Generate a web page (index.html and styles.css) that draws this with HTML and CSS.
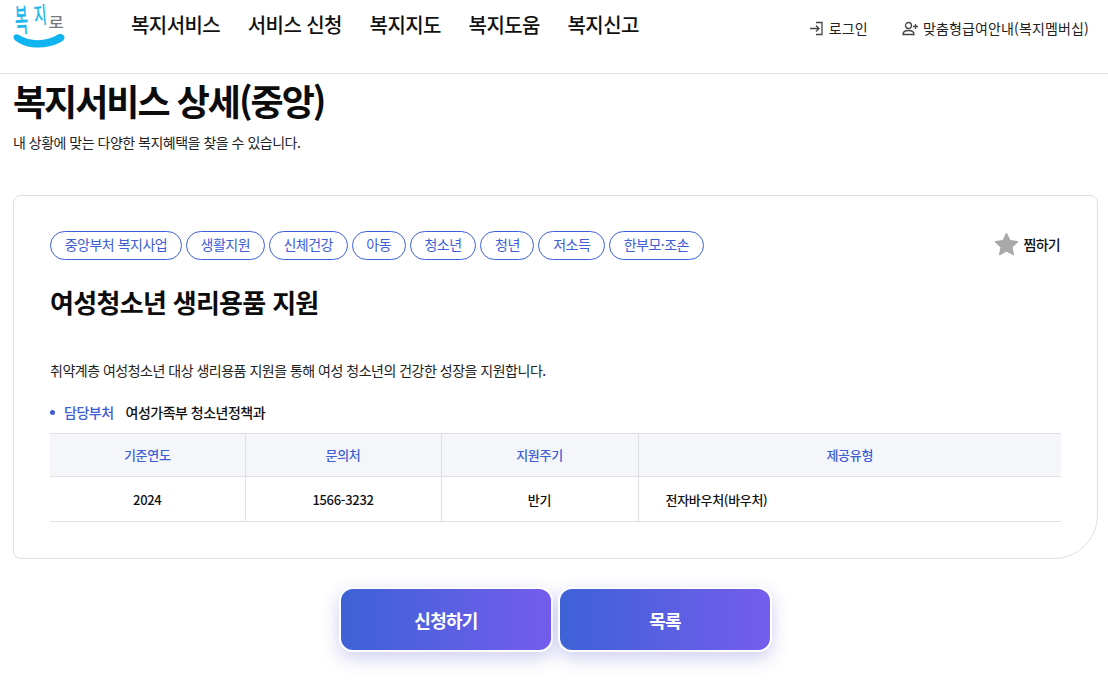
FILE: index.html
```html
<!DOCTYPE html>
<html lang="ko">
<head>
<meta charset="utf-8">
<title>복지서비스 상세(중앙)</title>
<link rel="stylesheet" href="styles.css">
</head>
<body>
<header class="header">
  <a class="logo" href="#" aria-label="복지로">
    <svg width="54" height="50" viewBox="0 0 54 50">
      <text class="logo-a" transform="translate(3.500 32) rotate(-3) scale(.8 1.78)">복</text>
      <text class="logo-b" transform="translate(22.500 24) rotate(-5) scale(.78 1.28)">지</text>
      <text class="logo-c" transform="translate(36.500 28) scale(.92 .8)">로</text>
      <path d="M1.500 37C1.500 34 5 33.500 7 35C18 42 34 42 46 34.500C49 33 53 35 52.500 38C52 40 50 41.500 48 42.500C34 50 14 49 4 41C2.500 40 1.500 38.500 1.500 37Z" class="logo-smile"/>
    </svg>
  </a>
  <nav class="gnb">
    <a href="#">복지서비스</a>
    <a href="#">서비스 신청</a>
    <a href="#">복지지도</a>
    <a href="#">복지도움</a>
    <a href="#">복지신고</a>
  </nav>
  <div class="util">
    <a href="#" class="util-login">
      <svg width="15" height="15" viewBox="0 0 15 15"><path d="M1 7.500H10M7 4.500L10 7.500L7 10.500M7 1.500H13V13.500H7" class="util-icon"/></svg>
      로그인
    </a>
    <a href="#" class="util-member">
      <svg width="17" height="15" viewBox="0 0 17 15"><circle cx="6.500" cy="4.500" r="3" class="util-icon"/><path d="M1 13.500C1 10.500 3 9.500 6.500 9.500S12 10.500 12 13.500ZM13.500 3V8M11 5.500H16" class="util-icon"/></svg>
      맞춤형급여안내(복지멤버십)
    </a>
  </div>
</header>

<main class="page">
  <h1 class="title">복지서비스 상세(중앙)</h1>
  <p class="subtitle">내 상황에 맞는 다양한 복지혜택을 찾을 수 있습니다.</p>

  <section class="card">
    <div class="card-top">
      <ul class="tags">
        <li>중앙부처 복지사업</li>
        <li>생활지원</li>
        <li>신체건강</li>
        <li>아동</li>
        <li>청소년</li>
        <li>청년</li>
        <li>저소득</li>
        <li>한부모·조손</li>
      </ul>
      <button class="fav" type="button">
        <svg width="25" height="25" viewBox="0 0 24 24"><path d="M12 1.500L15.200 8.200L22.700 9.300L17.200 14.400L18.600 21.800L12 18.200L5.400 21.800L6.800 14.400L1.300 9.300L8.800 8.200Z" class="star"/></svg>
        찜하기
      </button>
    </div>
    <h2 class="svc-name">여성청소년 생리용품 지원</h2>
    <p class="svc-desc">취약계층 여성청소년 대상 생리용품 지원을 통해 여성 청소년의 건강한 성장을 지원합니다.</p>
    <div class="dept">
      <span class="dept-label">담당부처</span>
      <span class="dept-value">여성가족부 청소년정책과</span>
    </div>
    <table class="info">
      <colgroup><col class="c1"><col class="c2"><col class="c3"><col></colgroup>
      <thead>
        <tr><th>기준연도</th><th>문의처</th><th>지원주기</th><th>제공유형</th></tr>
      </thead>
      <tbody>
        <tr><td>2024</td><td>1566-3232</td><td>반기</td><td class="left">전자바우처(바우처)</td></tr>
      </tbody>
    </table>
  </section>

  <div class="actions">
    <a class="btn" href="#">신청하기</a>
    <a class="btn" href="#">목록</a>
  </div>
</main>
</body>
</html>
```
FILE: styles.css
```css
* { box-sizing: border-box; }
html, body { margin: 0; padding: 0; }
body {
  width: 1108px;
  height: 683px;
  overflow: hidden;
  background: #fff;
  color: #111;
  font-family: "Noto Sans CJK KR", "Noto Sans", sans-serif;
}
a { color: inherit; text-decoration: none; }

.header {
  display: flex;
  height: 74px;
  border-bottom: 1px solid #e0e0e0;
  padding-left: 12px;
}
.logo { display: block; width: 54px; height: 50px; }
.logo svg { display: block; overflow: visible; }
.logo text { font-family: "Noto Sans CJK KR", sans-serif; font-size: 18px; font-weight: 500; }
.logo-a, .logo-b { fill: #1cb8ee; }
.logo-c { fill: #77797d; }
.logo-smile { fill: #0fb4f0; }

.gnb {
  display: flex;
  gap: 27.700px;
  margin-left: 65px;
  padding-top: 11px;
  font-size: 20px;
  font-weight: 500;
  letter-spacing: -0.58px;
  line-height: 28px;
  color: #111;
}
.util {
  display: flex;
  gap: 34px;
  margin-left: auto;
  padding: 18px 19px 0 0;
  font-size: 14px;
  line-height: 20px;
  letter-spacing: 0.15px;
  color: #222;
}
.util a { display: flex; align-items: center; gap: 4px; height: 20px; }
.util a.util-login { gap: 5px; }
.util-icon { fill: none; stroke: #444; stroke-width: 1.300; }

.page { padding: 0 10px 0 13px; }
.title {
  margin: 0;
  padding-top: 1px;
  font-size: 36px;
  font-weight: 700;
  line-height: 50px;
  letter-spacing: -2px;
  color: #0c0c0c;
}
.subtitle {
  margin: 7px 0 0;
  font-size: 14px;
  line-height: 20px;
  letter-spacing: -0.5px;
  color: #222;
}
.card {
  margin-top: 43px;
  height: 364px;
  border: 1px solid #e0e0e0;
  border-radius: 8px 8px 44px 8px;
  padding: 35px 36px 0;
}
.card-top { display: flex; justify-content: space-between; align-items: center; height: 29px; }
.tags { display: flex; gap: 4px; margin: 0; padding: 0; list-style: none; }
.tags li {
  height: 29px;
  padding: 0 13.700px;
  border: 1px solid #3e60d8;
  border-radius: 15px;
  color: #3d5ed4;
  font-size: 14px;
  line-height: 25px;
  letter-spacing: -0.5px;
}
.fav {
  display: flex;
  align-items: center;
  gap: 4px;
  margin: 0 1px 3px 0;
  padding: 0;
  border: 0;
  background: none;
  font: 500 14px/24px "Noto Sans CJK KR", sans-serif;
  letter-spacing: -0.7px;
  color: #111;
}
.star { fill: #a9a9a9; stroke: #a9a9a9; stroke-width: 1.200; stroke-linejoin: round; }
.svc-name {
  margin: 24px 0 0;
  font-size: 26px;
  font-weight: 700;
  line-height: 36px;
  letter-spacing: -0.7px;
  color: #0c0c0c;
}
.svc-desc {
  margin: 40px 0 0;
  font-size: 14px;
  line-height: 20px;
  letter-spacing: -0.5px;
  color: #222;
}
.dept {
  display: flex;
  align-items: center;
  gap: 12px;
  margin-top: 22px;
  height: 20px;
  font-size: 14px;
  letter-spacing: -0.5px;
}
.dept-label { position: relative; padding-left: 14px; color: #3d5ed4; font-weight: 500; }
.dept-label::before {
  content: "";
  position: absolute;
  left: 0;
  top: 8px;
  width: 5px;
  height: 5px;
  border-radius: 50%;
  background: #3d5ed4;
}
.dept-value { color: #111; font-weight: 500; }
.info {
  width: 100%;
  margin-top: 11px;
  border-collapse: collapse;
  table-layout: fixed;
  font-size: 13px;
  letter-spacing: -0.3px;
}
.c1 { width: 195px; }
.c2 { width: 196px; }
.c3 { width: 197px; }
.info th, .info td { border: 1px solid #dfe0e4; border-left: 0; text-align: center; }
.info th:last-child, .info td:last-child { border-right: 0; }
.info th {
  height: 43px;
  padding: 0 0 2px;
  background: #f5f6fa;
  color: #3d5ed4;
  font-weight: 500;
}
.info td { height: 45px; font-weight: 500; color: #111; }
.info td.left { text-align: left; padding-left: 27px; }

.actions {
  display: flex;
  justify-content: center;
  gap: 5px;
  margin-top: 28px;
}
.btn {
  display: flex;
  align-items: center;
  justify-content: center;
  width: 214px;
  height: 65px;
  border: 2px solid #fff;
  border-radius: 14px;
  background: linear-gradient(90deg, #3d62d6, #755ded);
  background-origin: border-box;
  box-shadow: 0 6px 18px rgba(80, 80, 200, .28);
  color: #fff;
  font-size: 18px;
  font-weight: 700;
  letter-spacing: -0.7px;
}
```
